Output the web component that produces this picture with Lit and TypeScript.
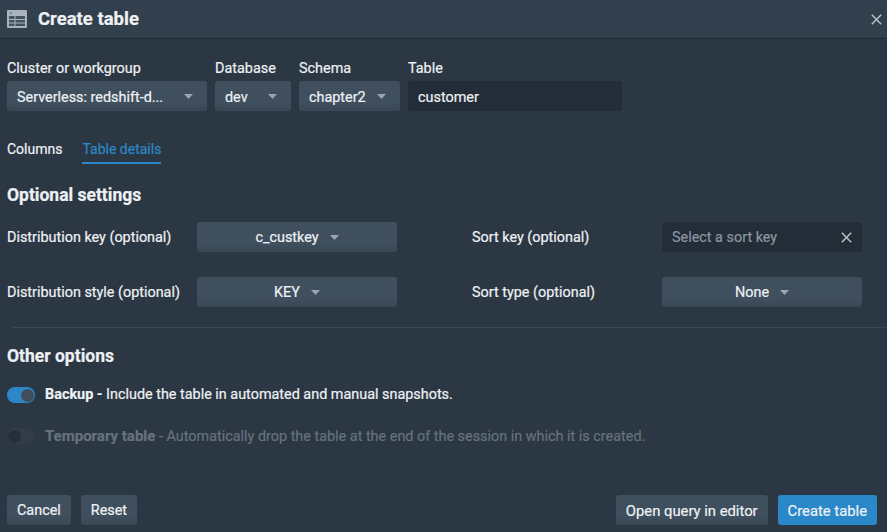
import { LitElement, html, css, svg } from 'lit';
import { customElement } from 'lit/decorators.js';

const caret = svg`<svg class="caret" width="9" height="5" viewBox="0 0 9 5"><path d="M0 0h9L4.500 5z" fill="#9aa5b0"/></svg>`;
const cross = svg`<svg width="11" height="11" viewBox="0 0 11 11"><path d="M.8.800l9.400 9.400M10.200.800L.8 10.200" stroke="#b9c1c9" stroke-width="1.500" fill="none"/></svg>`;

@customElement('app-root')
export class AppRoot extends LitElement {
  static styles = css`
    :host {
      display: flex;
      flex-direction: column;
      width: 887px;
      height: 532px;
      overflow: hidden;
      background: #2b3743;
      color: #eef1f4;
      font-family: Roboto, "Noto Sans", sans-serif;
      font-size: 14.4px;
      line-height: 20px;
      -webkit-text-stroke: 0.2px;
    }

    .header {
      display: flex;
      align-items: center;
      height: 38px;
      padding: 0 5px 0 7px;
      background: #323f4d;
      border-bottom: 1px solid #212b35;
      flex: none;
    }
    .header svg.table { margin-right: 11px; }
    .header h1 {
      flex: 1;
      margin: 0;
      font-size: 18.500px;
      font-weight: 700;
    }

    .selectors {
      display: flex;
      gap: 8px;
      margin: 20px 0 0 7px;
    }
    .field label { display: block; height: 22px; }
    .control {
      display: flex;
      align-items: center;
      justify-content: center;
      height: 30px;
      box-sizing: border-box;
      border-radius: 3px;
      background: linear-gradient(#3f4f5e 72%, #394754);
      white-space: nowrap;
      padding-top: 1px;
    }
    .control .caret { margin-left: 11px; }
    .selectors .control { justify-content: space-between; padding: 3px 14px 0 10px; }
    .selectors .control .caret { margin-top: -3px; }
    .input {
      justify-content: space-between;
      padding: 1px 10px 0;
      background: #222d37;
    }
    .selectors .control.input { padding: 3px 10px 0; }
    .placeholder { color: #8a96a1; }

    .tabs {
      display: flex;
      gap: 20px;
      margin: 28px 0 0 7px;
      font-size: 14px;
    }
    .tab { height: 23px; }
    .tab.active {
      color: #2b88c8;
      border-bottom: 2px solid #2b88c8;
    }

    h2 {
      margin: 20px 0 0 7px;
      font-size: 17.500px;
      font-weight: 700;
      line-height: 22px;
    }

    .settings {
      display: grid;
      grid-template-columns: 190px 200px 75px 190px 200px;
      row-gap: 25px;
      margin: 16px 0 0 7px;
      align-items: center;
    }
    .settings > span { padding-top: 1px; }
    .settings .gap { grid-column: 3; }

    .divider {
      height: 1px;
      margin: 20px 0 0 12px;
      background: #3a4653;
    }
    h2.other { margin-top: 17px; }

    .option {
      display: flex;
      align-items: center;
      gap: 10px;
      margin-left: 7px;
      height: 20px;
    }
    .option.first { margin-top: 18px; }
    .option.second { margin-top: 21px; color: #66727e; }
    .option b { font-weight: 700; }
    .option.second b { font-size: 15px; }

    .toggle {
      display: flex;
      justify-content: flex-end;
      align-items: center;
      width: 28px;
      height: 16px;
      padding: 0 1px;
      box-sizing: border-box;
      border-radius: 8px;
      background: #2b88c8;
    }
    .toggle.off {
      justify-content: flex-start;
      background: #303c48;
    }
    .knob {
      width: 13px;
      height: 13px;
      border-radius: 50%;
      background: #414d59;
    }
    .toggle.off .knob { background: #242f39; }

    .footer {
      display: flex;
      justify-content: space-between;
      margin: auto 10px 7px 7px;
    }
    .footer div { display: flex; gap: 10px; }
    .footer .right { font-size: 14.800px; }
    .btn { padding: 1px 10px 0; }
    .btn.primary { background: #2b88c8; }
  `;

  render() {
    return html`
      <div class="header">
        <svg class="table" width="20" height="18" viewBox="0 0 20 18">
          <rect x="0" y="0" width="20" height="18" rx="1" fill="#a9b3bc"/>
          <circle cx="4" cy="3" r=".8" fill="#323f4d"/>
          <path d="M2 6h16v3H2zM2 10h16v2.500H2zM2 13.500h16V16H2z" fill="#46535f"/>
          <path d="M8 6v10" stroke="#a9b3bc" stroke-width="1"/>
        </svg>
        <h1>Create table</h1>
        ${cross}
      </div>

      <div class="selectors">
        <div class="field" style="width:200px">
          <label>Cluster or workgroup</label>
          <div class="control"><span>Serverless: redshift-d...</span>${caret}</div>
        </div>
        <div class="field" style="width:76px">
          <label>Database</label>
          <div class="control"><span>dev</span>${caret}</div>
        </div>
        <div class="field" style="width:101px">
          <label>Schema</label>
          <div class="control"><span>chapter2</span>${caret}</div>
        </div>
        <div class="field" style="width:214px">
          <label>Table</label>
          <div class="control input"><span>customer</span></div>
        </div>
      </div>

      <div class="tabs">
        <div class="tab">Columns</div>
        <div class="tab active">Table details</div>
      </div>

      <h2>Optional settings</h2>
      <div class="settings">
        <span>Distribution key (optional)</span>
        <div class="control"><span>c_custkey</span>${caret}</div>
        <span class="gap"></span>
        <span>Sort key (optional)</span>
        <div class="control input"><span class="placeholder">Select a sort key</span>${cross}</div>

        <span>Distribution style (optional)</span>
        <div class="control"><span>KEY</span>${caret}</div>
        <span class="gap"></span>
        <span>Sort type (optional)</span>
        <div class="control"><span>None</span>${caret}</div>
      </div>

      <div class="divider"></div>

      <h2 class="other">Other options</h2>
      <div class="option first">
        <div class="toggle"><div class="knob"></div></div>
        <span><b>Backup -</b> Include the table in automated and manual snapshots.</span>
      </div>
      <div class="option second">
        <div class="toggle off"><div class="knob"></div></div>
        <span><b>Temporary table</b> - Automatically drop the table at the end of the session in which it is created.</span>
      </div>

      <div class="footer">
        <div>
          <div class="control btn">Cancel</div>
          <div class="control btn">Reset</div>
        </div>
        <div class="right">
          <div class="control btn">Open query in editor</div>
          <div class="control btn primary">Create table</div>
        </div>
      </div>
    `;
  }
}
